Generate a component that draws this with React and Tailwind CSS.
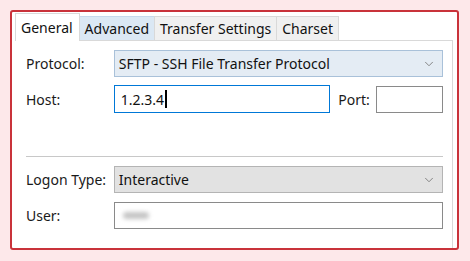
import { ChevronDown } from "lucide-react";

const font = { fontFamily: '"Noto Sans", "Open Sans", sans-serif' };

function Tab({ label, active, hover }) {
  if (active) {
    return (
      <div className="relative z-10 -mb-px flex h-[28px] items-center border border-b-0 border-[#d9d9d9] bg-white pl-[5px] pr-[6px] text-[14px] text-[#111]">
        {label}
      </div>
    );
  }
  return (
    <div
      className={`-ml-px mt-[3px] flex h-[24px] items-center border border-b-0 px-[5px] text-[14px] text-[#111] ${
        hover ? "border-[#c6d9ec] bg-[#dbe8f4]" : "border-[#d9d9d9] bg-[#f0f0f0]"
      }`}
    >
      {label}
    </div>
  );
}

function Select({ value, blue }) {
  return (
    <div
      className={`flex h-[27px] w-[330px] items-center justify-between border px-[4px] text-[14px] text-[#111] ${
        blue ? "border-[#a9c1d9] bg-[#e4ecf4]" : "border-[#b4b4b4] bg-[#e2e2e2]"
      }`}
    >
      <span>{value}</span>
      <ChevronDown className="mr-[2px] h-[14px] w-[14px] text-[#777]" strokeWidth={1.5} />
    </div>
  );
}

export default function App() {
  return (
    <div className="h-[261px] w-[470px] bg-[#fde8ea] pl-[10px] pt-[10px]" style={font}>
      <div className="flex h-[240px] w-[449px] flex-col rounded-[3px] border-2 border-[#c9323a] bg-white pl-[3px] pr-[4px] pt-[1px]">
        {/* tabs */}
        <div className="flex items-end">
          <Tab label="General" active />
          <Tab label="Advanced" hover />
          <Tab label="Transfer Settings" />
          <Tab label="Charset" />
        </div>

        {/* tab page */}
        <div className="flex flex-1 flex-col border-r border-t border-[#d9d9d9] pl-[11px] pr-[9px] pt-[9px] text-[14px] text-[#1a1a1a]">
          <div className="flex items-center">
            <span className="w-[88px]">Protocol:</span>
            <Select value="SFTP - SSH File Transfer Protocol" blue />
          </div>

          <div className="mt-[8px] flex items-center">
            <span className="w-[88px]">Host:</span>
            <div className="flex h-[28px] w-[217px] items-center border border-[#0078d7] px-[6px] text-[#111]">
              <span>1.2.3.4</span>
              <span className="ml-px h-[18px] w-[2px] bg-black" />
            </div>
            <span className="ml-[8px] w-[38px]">Port:</span>
            <div className="h-[27px] w-[67px] border border-[#8a8a8a]" />
          </div>

          <div className="mt-[43px] h-px w-[417px] bg-[#c8c8c8]" />

          <div className="mt-[9px] flex items-center">
            <span className="w-[88px]">Logon Type:</span>
            <Select value="Interactive" />
          </div>

          <div className="mt-[9px] flex items-center">
            <span className="w-[88px]">User:</span>
            <div className="flex h-[27px] w-[330px] items-center border border-[#8a8a8a] px-[8px]">
              <div className="h-[7px] w-[26px] rounded-full bg-[#c4c4c4] blur-[2px]" />
            </div>
          </div>
        </div>
      </div>
    </div>
  );
}
